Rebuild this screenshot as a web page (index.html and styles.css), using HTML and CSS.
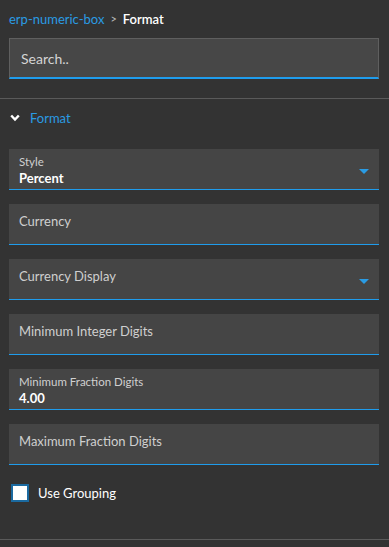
FILE: index.html
```html
<!DOCTYPE html>
<html lang="en">
<head>
  <meta charset="UTF-8" />
  <title>Format</title>
  <link rel="stylesheet" href="styles.css">
</head>
<body>
<div class="panel">
  <div class="crumbs">
    <a class="crumb-link">erp-numeric-box</a>
    <span class="crumb-sep">&gt;</span>
    <span class="crumb-current">Format</span>
  </div>

  <div class="search-wrap">
    <input class="search" type="text" placeholder="Search.." />
  </div>

  <div class="section">
    <div class="section-head">
      <svg class="chevron" viewBox="0 0 10 8" width="10" height="8">
        <polyline points="1.2,1.5 5,5.6 8.8,1.5" fill="none" stroke="#fff" stroke-width="2.4" />
      </svg>
      <span class="section-title">Format</span>
    </div>

    <div class="fields">
      <div class="field filled select">
        <div class="field-label">Style</div>
        <div class="field-value">Percent</div>
        <span class="arrow"></span>
      </div>
      <div class="field">
        <div class="field-placeholder">Currency</div>
      </div>
      <div class="field select">
        <div class="field-placeholder">Currency Display</div>
        <span class="arrow"></span>
      </div>
      <div class="field">
        <div class="field-placeholder">Minimum Integer Digits</div>
      </div>
      <div class="field filled">
        <div class="field-label">Minimum Fraction Digits</div>
        <div class="field-value">4.00</div>
      </div>
      <div class="field">
        <div class="field-placeholder">Maximum Fraction Digits</div>
      </div>
    </div>

    <label class="check">
      <span class="check-box"></span>
      <span class="check-text">Use Grouping</span>
    </label>
  </div>
</div>
</body>
</html>
```

FILE: styles.css
```css
* {
  box-sizing: border-box;
}

body {
  margin: 0;
  background: #333333;
  font-family: 'Lato', 'Open Sans', sans-serif;
  color: #fff;
}

.panel {
  width: 389px;
  min-height: 547px;
}

.crumbs {
  display: flex;
  align-items: center;
  gap: 6px;
  padding: 9px 9px 0 9px;
  height: 28px;
  font-size: 13px;
}
.crumb-link {
  color: #2a9be3;
}
.crumb-sep {
  color: #bbb;
  font-size: 11px;
}
.crumb-current {
  color: #fff;
  font-weight: 600;
}

.search-wrap {
  padding: 10px 10px 0 9px;
}
.search {
  display: block;
  width: 100%;
  height: 41px;
  padding: 0 11px;
  background: #474747;
  border: 1px solid #5f5f5f;
  border-bottom: 2px solid #1f9cec;
  color: #ddd;
  font-family: inherit;
  font-size: 14px;
  outline: none;
}
.search::placeholder {
  color: #d4d4d4;
}

.section {
  margin-top: 19px;
  border-top: 1px solid #5a5a5a;
  border-bottom: 1px solid #5a5a5a;
  padding-bottom: 37px;
}
.section-head {
  display: flex;
  align-items: center;
  gap: 10px;
  padding: 0 10px;
  height: 38px;
}
.chevron {
  display: block;
}
.section-title {
  color: #2a9be3;
  font-size: 13px;
}

.fields {
  display: flex;
  flex-direction: column;
  gap: 14px;
  padding: 12px 10px 0 9px;
}
.field {
  position: relative;
  height: 41px;
  background: #454545;
  border-bottom: 1px solid #1f9cec;
  padding: 0 10px;
  display: flex;
  flex-direction: column;
  justify-content: center;
}
.field.filled {
  justify-content: flex-start;
  padding-top: 6px;
}
.field-placeholder {
  color: #cfcfcf;
  font-size: 13px;
  margin-top: -6px;
}
.field-label {
  color: #d0d0d0;
  font-size: 11.5px;
  line-height: 14px;
}
.field-value {
  color: #fff;
  font-size: 13px;
  font-weight: 700;
  line-height: 18px;
}
.arrow {
  position: absolute;
  right: 10px;
  top: 20px;
  width: 0;
  height: 0;
  border-left: 5px solid transparent;
  border-right: 5px solid transparent;
  border-top: 5px solid #2a9be3;
}

.check {
  display: flex;
  align-items: center;
  gap: 9px;
  padding: 19px 11px 0 11px;
}
.check-box {
  width: 18px;
  height: 18px;
  background: #fff;
  border: 2px solid #1b6aa0;
}
.check-text {
  font-size: 13px;
  color: #fff;
}
```
